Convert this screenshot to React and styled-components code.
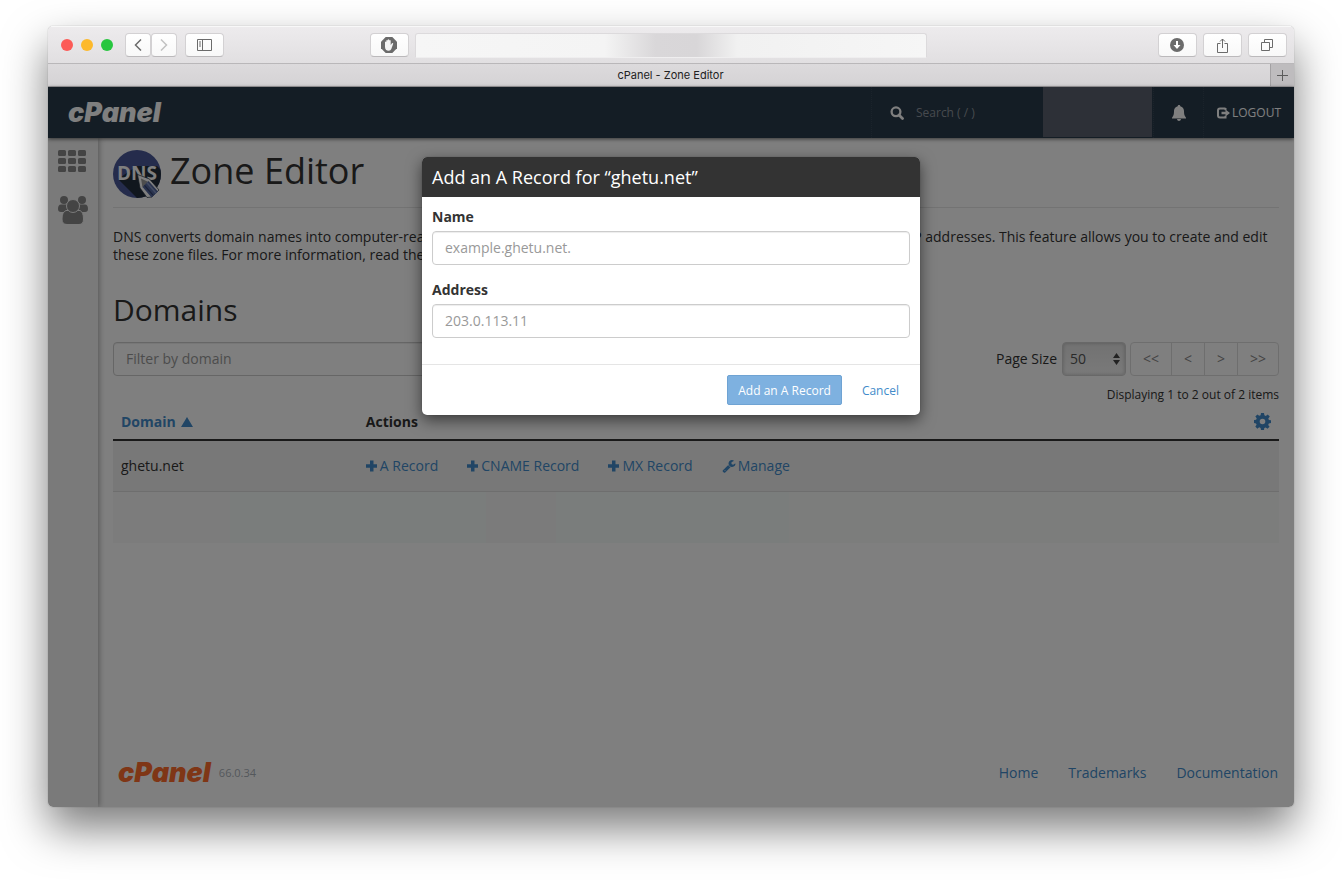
import React from "react";
import styled, { createGlobalStyle, css } from "styled-components";

const GlobalStyle = createGlobalStyle`
  *, *::before, *::after { box-sizing: border-box; }
  html { background: #fff; }
  body {
    margin: 0;
    color: #333;
    font-family: "Open Sans", "Noto Sans", sans-serif;
    font-size: 14px;
    line-height: 20px;
  }
  button, input, select { font: inherit; color: inherit; margin: 0; }
  h1, h2, p { margin: 0; font-weight: 400; }
  a { color: #428bca; text-decoration: none; }
  svg { display: block; flex: none; }
`;

/* ---------- browser window ---------- */

const Desktop = styled.div`
  min-height: 100vh;
  padding: 26px 48px 74px;
  display: flex;
  overflow: hidden;
`;

const BrowserWindow = styled.div`
  flex: 1;
  min-width: 0;
  display: flex;
  flex-direction: column;
  border-radius: 5px;
  overflow: hidden;
  box-shadow: 0 0 1px rgba(0, 0, 0, 0.45), 0 21px 44px rgba(0, 0, 0, 0.52);
`;

const Chrome = styled.div`
  display: grid;
  grid-template-columns: 29fr 42fr 29fr;
  gap: 6px;
  align-items: center;
  height: 38px;
  padding: 0 7px;
  background: linear-gradient(#edebed, #e1dfe1);
  border-top: 1px solid #f8f8f8;
  border-bottom: 1px solid #b9b7b9;
`;

const ChromeGroup = styled.div`
  display: flex;
  align-items: center;
  justify-content: ${(p) => (p.$end ? "flex-end" : "flex-start")};
  gap: ${(p) => p.$gap || 0}px;
`;

const Light = styled.button`
  width: 12px;
  height: 12px;
  padding: 0;
  border: 0;
  border-radius: 50%;
  background: ${(p) => p.$color};
`;

const ChromeButton = styled.button`
  display: flex;
  align-items: center;
  justify-content: center;
  width: ${(p) => (p.$small ? 26 : 39)}px;
  height: 24px;
  padding: 0;
  border: 1px solid #d3d1d3;
  border-bottom-color: #bbb9bb;
  border-radius: 4px;
  background: linear-gradient(#fff, #f8f8f8);
  color: #6b6b6b;
`;

const Spacer = styled.div`
  width: ${(p) => p.$width || 0}px;
  flex: ${(p) => (p.$grow ? 1 : "none")};
`;

const AddressField = styled.input`
  width: 100%;
  height: 25px;
  padding: 0 8px;
  border: 1px solid #dcdadc;
  border-bottom-color: #efeeef;
  border-radius: 3px 3px 0 0;
  background: linear-gradient(
    90deg, #f6f6f6 0%, #f4f4f4 37%, #d9d7d9 47%, #d8d6d8 55%, #f1f1f1 63%, #f6f6f6 100%
  );
`;

const TabBar = styled.div`
  display: flex;
  height: 23px;
  background: linear-gradient(#dcdadc, #d5d3d5);
  border-bottom: 1px solid #a3a1a3;
`;

const Tab = styled.div`
  flex: 1;
  padding-left: 23px;
  text-align: center;
  font: 11px/22px Inter, sans-serif;
  color: #222;
`;

const NewTab = styled.button`
  display: flex;
  align-items: center;
  justify-content: center;
  width: 24px;
  padding: 0;
  border: 0;
  border-left: 1px solid #a3a1a3;
  background: #bebcbe;
  color: #5c5c5c;
`;

/* ---------- application ---------- */

const Viewport = styled.div`
  position: relative;
  flex: 1;
  display: flex;
  flex-direction: column;
  background: #fff;
`;

const AppHeader = styled.header`
  display: flex;
  align-items: stretch;
  height: 51px;
  padding-left: 20px;
  background: #293a4a;
  color: #fff;
  box-shadow: 0 1px 4px rgba(0, 0, 0, 0.6);
  z-index: 1;
`;

const Brand = styled.a`
  display: flex;
  align-items: center;
  font: italic 900 27px/26px Inter, sans-serif;
  color: ${(p) => (p.$orange ? "#ff6c2c" : "#fff")};
`;

const HeaderItem = styled.div`
  display: flex;
  align-items: center;
  padding: ${(p) => p.$pad || "0"};
  border-left: 1px dotted #364757;
`;

const SearchInput = styled.input`
  width: 127px;
  padding: 0;
  margin-left: 12px;
  border: 0;
  background: none;
  font-size: 12px;
  &::placeholder { color: #8d959d; opacity: 1; }
`;

const AccountBlock = styled.div`
  width: 109px;
  margin: 0 1px 1px 0;
  background: #5b616e;
`;

const HeaderButton = styled.button`
  display: flex;
  align-items: center;
  gap: 2px;
  padding: 0;
  border: 0;
  background: none;
  font-size: 12px;
`;

const Body = styled.div`
  flex: 1;
  display: flex;
`;

const Sidebar = styled.nav`
  display: flex;
  flex-direction: column;
  align-items: flex-start;
  gap: 24px;
  width: 50px;
  padding: 12px 0 0 10px;
  background: #f5f5f5;
  box-shadow: 1px 0 6px rgba(0, 0, 0, 0.35);
  color: #888;
`;

const SideLink = styled.a`
  color: inherit;
`;

const Main = styled.main`
  flex: 1;
  min-width: 0;
  display: flex;
  flex-direction: column;
  padding: 12px 15px 24px;
`;

const TitleRow = styled.div`
  display: flex;
  gap: 9px;
  padding-bottom: 9px;
  margin-bottom: 20px;
  border-bottom: 1px solid #e6e6e6;
`;

const PageTitle = styled.h1`
  font-size: 36px;
  line-height: 42px;
`;

const Intro = styled.p`
  line-height: 18px;
  margin-bottom: 28px;
`;

const SectionTitle = styled.h2`
  font-size: 30px;
  line-height: 36px;
  margin-bottom: 14px;
`;

const ListTools = styled.div`
  display: flex;
  align-items: center;
  justify-content: space-between;
`;

const TextInput = styled.input`
  display: block;
  width: ${(p) => p.$width || "100%"};
  height: 34px;
  padding: 0 12px 2px;
  border: 1px solid #ccc;
  border-radius: 4px;
  background: #fff;
  box-shadow: inset 0 1px 1px rgba(0, 0, 0, 0.075);
  &::placeholder { color: #999; opacity: 1; }
`;

const Pager = styled.div`
  display: flex;
  align-items: center;
`;

const SelectWrap = styled.div`
  position: relative;
  margin: 0 4px 0 5px;
  svg {
    position: absolute;
    right: 6px;
    top: 11px;
    pointer-events: none;
  }
`;

const SizeSelect = styled.select`
  appearance: none;
  display: block;
  width: 64px;
  height: 34px;
  padding: 0 7px;
  border: 1px solid #d0d0d0;
  border-radius: 4px;
  background: linear-gradient(#e4e4e4, #f4f4f4);
  box-shadow: inset 0 0 3px 1px rgba(0, 0, 0, 0.14);
  color: #555;
`;

const PageButton = styled.button`
  width: ${(p) => (p.$wide ? 42 : 34)}px;
  height: 34px;
  margin-left: -1px;
  padding: 0;
  border: 1px solid #ddd;
  background: #fff;
  color: #888;
  &:first-of-type { margin-left: 0; border-radius: 4px 0 0 4px; }
  &:last-of-type { border-radius: 0 4px 4px 0; }
`;

const Count = styled.div`
  margin-top: 10px;
  text-align: right;
  font-size: 12px;
  line-height: 18px;
`;

const RecordTable = styled.table`
  width: 100%;
  border-collapse: separate;
  border-spacing: 0;
  table-layout: fixed;
`;

const Th = styled.th`
  width: ${(p) => p.$width || "auto"};
  height: 37px;
  padding: 0 8px;
  text-align: left;
  font-weight: 700;
  border-bottom: 2px solid #333;
`;

const Td = styled.td`
  height: 51px;
  padding: 0 8px;
  background: #f1f1f1;
  border-bottom: 1px solid #dcdcdc;
`;

const HiddenRowCell = styled.td`
  height: 51px;
  padding: 0;
  background: linear-gradient(
    90deg, #f8f8f8 0 10%, #f5faf8 10% 32%, #f7f7f7 32% 38%, #f5faf8 38% 58%, #f9faf9 58% 100%
  );
`;

const SortButton = styled.button`
  display: flex;
  align-items: center;
  gap: 5px;
  padding: 0;
  border: 0;
  background: none;
  font-weight: 700;
  color: #428bca;
`;

const GearButton = styled.button`
  display: block;
  margin-left: auto;
  padding: 0;
  border: 0;
  background: none;
  color: #428bca;
`;

const Actions = styled.div`
  display: flex;
  gap: 29px;
`;

const Action = styled.a`
  display: flex;
  align-items: center;
  gap: 2px;
`;

const Footer = styled.footer`
  display: flex;
  align-items: center;
  justify-content: space-between;
  height: 20px;
  margin-top: auto;
  padding: 0 1px 0 5px;
`;

const Version = styled.span`
  font-size: 11px;
  color: #a9b0b8;
`;

const FooterGroup = styled.div`
  display: flex;
  align-items: center;
  gap: ${(p) => p.$gap}px;
`;

/* ---------- modal ---------- */

const Backdrop = styled.div`
  position: absolute;
  inset: 0;
  z-index: 2;
  display: flex;
  justify-content: center;
  align-items: flex-start;
  padding-top: 70px;
  background: rgba(0, 0, 0, 0.5);
`;

const Modal = styled.form`
  width: 498px;
  border-radius: 5px;
  overflow: hidden;
  background: #fff;
  box-shadow: 0 0 1px rgba(0, 0, 0, 0.4), 0 5px 15px rgba(0, 0, 0, 0.55);
`;

const ModalTitle = styled.h2`
  padding: 0 10px;
  background: #333;
  color: #fff;
  font-size: 18px;
  line-height: 40px;
`;

const ModalBody = styled.div`
  display: grid;
  gap: 15px;
  padding: 10px 10px 26px;
`;

const Field = styled.div`
  display: grid;
  gap: 4px;
`;

const Label = styled.label`
  font-weight: ${(p) => (p.$plain ? 400 : 700)};
`;

const ModalFooter = styled.div`
  display: flex;
  justify-content: flex-end;
  gap: 9px;
  padding: 10px;
  border-top: 1px solid #e5e5e5;
`;

const ModalButton = styled.button`
  height: 30px;
  padding: 2px 10px 0;
  border: 1px solid transparent;
  border-radius: 2px;
  background: none;
  font-size: 12px;
  color: #428bca;
  ${(p) =>
    p.$primary &&
    css`
      background: #7eb1e0;
      border-color: #6fa3d3;
      color: #fff;
    `}
`;

/* ---------- icons ---------- */

const Stroke = ({ w, h, sw = 1, children }) => (
  <svg width={w} height={h} viewBox={`0 0 ${w} ${h}`} fill="none" stroke="currentColor" strokeWidth={sw}>
    {children}
  </svg>
);

const PlusIcon = () => (
  <svg width="12" height="12" viewBox="0 0 12 12" fill="currentColor">
    <path d="M4 .5h3.500v3.700H11v3.500H7.500V11.500H4V7.700H0V4.200h4z" />
  </svg>
);

const WrenchIcon = () => (
  <svg width="14" height="14" viewBox="0 0 1792 1792" fill="currentColor">
    <path d="M448 1472q0-26-19-45t-45-19-45 19-19 45 19 45 45 19 45-19 19-45zm644-420l-682 682q-37 37-90 37-52 0-91-37l-106-108q-38-36-38-90 0-53 38-91l681-681q39 98 114.500 173.500t173.500 114.500zm634-435q0 39-23 106-47 134-164.500 217.500t-258.500 83.500q-185 0-316.500-131.500t-131.500-316.500 131.500-316.500 316.500-131.500q58 0 121.500 16.500t107.500 46.500q16 11 16 28t-16 28l-293 169v224l193 107q5-3 79-48.500t135.500-81 70.500-35.500q15 0 23.500 10t8.500 25z" />
  </svg>
);

const GearIcon = () => (
  <svg width="17" height="17" viewBox="0 0 17 17" fill="currentColor">
    <path
      fillRule="evenodd"
      d="M7 0h3l.4 2.300 1.400.6L13.700 1.500l2.100 2.100-1.500 1.900.6 1.400L17 7.200v2.900l-2.200.4-.6 1.400 1.400 1.900-2.100 2-1.800-1.400-1.400.6L10 17H7l-.4-2.100-1.400-.6-1.900 1.400-2-2.100 1.300-1.800-.6-1.400L0 10V7l2.100-.3.6-1.400L1.300 3.500l2.100-2.100 1.800 1.400 1.400-.6zM8.500 5.700a2.800 2.800 0 1 0 0 5.600 2.800 2.800 0 0 0 0-5.600z"
    />
  </svg>
);

const SearchIcon = () => (
  <Stroke w={14} h={14} sw={2.3}>
    <circle cx="6" cy="5.800" r="4.400" />
    <path d="M9 9l3.500 3.500" strokeWidth="2.800" strokeLinecap="round" />
  </Stroke>
);

const BellIcon = () => (
  <svg width="14" height="16" viewBox="0 0 14 16" fill="currentColor">
    <path d="M7 0c.9 0 1.200.5 1.300 1.200C10.700 1.800 12 3.700 12 6c0 3.700.5 4.700 2 6.800V13.500H0v-.7C1.500 10.700 2 9.700 2 6c0-2.300 1.300-4.200 3.700-4.800C5.800.5 6.100 0 7 0zM5 14h4c-.2 1.200-.9 2-2 2s-1.800-.8-2-2z" />
  </svg>
);

const LogoutIcon = () => (
  <svg width="13" height="12" viewBox="0 0 13 12">
    <path d="M8.500 1.500H3Q1 1.500 1 3.500v5q0 2 2 2H8.500V8.800M8.500 3.200V1" fill="none" stroke="currentColor" strokeWidth="2" />
    <path d="M4.500 4.800h4V2.400L13 6 8.500 9.600V7.200h-4z" fill="currentColor" />
  </svg>
);

const GridIcon = () => (
  <svg width="28" height="22" viewBox="0 0 28 22" fill="currentColor">
    {[0, 8, 16].map((y) =>
      [0, 10, 20].map((x) => <rect key={`${x}-${y}`} x={x} y={y} width="8" height="6" rx="1.500" />)
    )}
  </svg>
);

const UsersIcon = () => (
  <svg width="30" height="28" viewBox="0 0 30 28" fill="currentColor">
    <circle cx="6" cy="4" r="4" />
    <circle cx="24" cy="4" r="4" />
    <path d="M3 8.500h8V16H3q-3 0-3-3 0-4.500 3-4.500zM27 8.500h-8V16h8q3 0 3-3 0-4.500-3-4.500z" />
    <path
      d="M8 14.500h14q3.500 1.500 3.500 8.500 0 5.500-4.500 5.500h-12Q4 28.500 4 23q0-7 4-8.500z"
      stroke="#f5f5f5"
      strokeWidth="1"
    />
    <circle cx="15" cy="10" r="6.500" stroke="#f5f5f5" strokeWidth="1" />
  </svg>
);

const DnsIcon = () => (
  <svg width="48" height="48" viewBox="0 0 48 48">
    <defs>
      <clipPath id="dns-disc"><circle cx="24" cy="24" r="24" /></clipPath>
    </defs>
    <g clipPath="url(#dns-disc)">
      <rect width="48" height="48" fill="#4b5998" />
      <path d="M5 29L24 16h20l8 8v28H28z" fill="#232f3d" />
    </g>
    <text x="4" y="30" fill="#fff" fontFamily="Open Sans, sans-serif" fontWeight="700" fontSize="19">DNS</text>
    <path d="M24.500 24.500l12 4.500 9.500 11-7 7-5 .5L27 38z" fill="#fff" stroke="#232f3d" strokeWidth=".7" />
    <path d="M28 28.500l7.500 3.500-6 5.500z" fill="#9a9a9a" />
    <path d="M35.500 31L45 41.500 38.500 47.500 29.500 37z" fill="#54689f" />
    <path d="M33.800 32.500l9.300 10.800" stroke="#8496c4" strokeWidth="1.600" />
    <path d="M31.500 35.300l8.500 9.900" stroke="#34426f" strokeWidth="1.300" />
  </svg>
);

const HandIcon = () => (
  <svg width="16" height="16" viewBox="0 0 16 16">
    <path d="M4.700 0h6.600L16 4.700v6.600L11.300 16H4.700L0 11.300V4.700z" fill="#6b6b6b" />
    <path d="M4 5q.7-.8 1.300 0V3.500q.7-.9 1.400 0V2.700q.8-1 1.500 0v.7q.8-.8 1.500.1V8l1.300-1.800q1.200-.5 1.200.5L10.300 12q-.6 1.700-2.500 1.700-3.800 0-3.800-4z" fill="#f4f4f4" />
  </svg>
);

/* ---------- page ---------- */

const recordActions = [
  { label: "A Record", Icon: PlusIcon },
  { label: "CNAME Record", Icon: PlusIcon },
  { label: "MX Record", Icon: PlusIcon },
  { label: "Manage", Icon: WrenchIcon },
];

function BrowserChrome() {
  return (
    <>
      <Chrome>
        <ChromeGroup>
          <Spacer $width={6} />
          <ChromeGroup $gap={8}>
            <Light $color="#fc5b57" aria-label="Close window" />
            <Light $color="#fdb92b" aria-label="Minimise window" />
            <Light $color="#27c63f" aria-label="Zoom window" />
          </ChromeGroup>
          <Spacer $width={12} />
          <ChromeButton $small aria-label="Back">
            <Stroke w={8} h={12} sw={1.5}><path d="M7 .5L1.500 6 7 11.500" /></Stroke>
          </ChromeButton>
          <ChromeButton $small aria-label="Forward">
            <Stroke w={8} h={12} sw={1.5}><path d="M1 .5L6.500 6 1 11.500" opacity=".4" /></Stroke>
          </ChromeButton>
          <Spacer $width={8} />
          <ChromeButton aria-label="Show sidebar">
            <Stroke w={15} h={12}>
              <path d="M.5.5h14v11H.5zM5.500.5v11M2 3h2M2 5h2M2 7h2" />
            </Stroke>
          </ChromeButton>
          <Spacer $grow />
          <ChromeButton aria-label="Content blocker"><HandIcon /></ChromeButton>
        </ChromeGroup>
        <AddressField aria-label="Address bar" />
        <ChromeGroup $end $gap={6}>
          <ChromeButton aria-label="Downloads">
            <svg width="14" height="14" viewBox="0 0 14 14">
              <circle cx="7" cy="7" r="7" fill="#6b6b6b" />
              <path d="M6 3h2v4h2.500L7 11 3.500 7H6z" fill="#fff" />
            </svg>
          </ChromeButton>
          <ChromeButton aria-label="Share">
            <Stroke w={11} h={15}><path d="M3.500 5.500h-3v9h10v-9h-3M5.500 10V1M3 3.500L5.500 1 8 3.500" /></Stroke>
          </ChromeButton>
          <ChromeButton aria-label="Show tabs">
            <Stroke w={12} h={12}><path d="M.5 3.500h8v8h-8zM3.500 3V.5h8v8H9" /></Stroke>
          </ChromeButton>
        </ChromeGroup>
      </Chrome>
      <TabBar>
        <Tab>cPanel - Zone Editor</Tab>
        <NewTab aria-label="New tab">
          <Stroke w={11} h={11}><path d="M5.500 0v11M0 5.500h11" /></Stroke>
        </NewTab>
      </TabBar>
    </>
  );
}

function AddRecordModal() {
  return (
    <Backdrop>
      <Modal role="dialog" aria-labelledby="modal-title" onSubmit={(e) => e.preventDefault()}>
        <ModalTitle id="modal-title">Add an A Record for “ghetu.net”</ModalTitle>
        <ModalBody>
          <Field>
            <Label htmlFor="record-name">Name</Label>
            <TextInput id="record-name" placeholder="example.ghetu.net." />
          </Field>
          <Field>
            <Label htmlFor="record-address">Address</Label>
            <TextInput id="record-address" placeholder="203.0.113.11" />
          </Field>
        </ModalBody>
        <ModalFooter>
          <ModalButton $primary type="submit">Add an A Record</ModalButton>
          <ModalButton type="button">Cancel</ModalButton>
        </ModalFooter>
      </Modal>
    </Backdrop>
  );
}

export default function App() {
  return (
    <>
      <GlobalStyle />
      <Desktop>
        <BrowserWindow>
          <BrowserChrome />
          <Viewport>
            <AppHeader>
              <Brand href="#home">cPanel</Brand>
              <Spacer $grow />
              <HeaderItem $pad="0 0 0 18px">
                <SearchIcon />
                <SearchInput type="search" placeholder="Search ( / )" aria-label="Search" />
              </HeaderItem>
              <AccountBlock />
              <HeaderItem $pad="0 17px 0 18px">
                <HeaderButton aria-label="Notifications"><BellIcon /></HeaderButton>
              </HeaderItem>
              <HeaderItem $pad="0 13px">
                <HeaderButton><LogoutIcon />LOGOUT</HeaderButton>
              </HeaderItem>
            </AppHeader>
            <Body>
              <Sidebar>
                <SideLink href="#apps" aria-label="Home"><GridIcon /></SideLink>
                <SideLink href="#users" aria-label="User manager"><UsersIcon /></SideLink>
              </Sidebar>
              <Main>
                <TitleRow>
                  <DnsIcon />
                  <PageTitle>Zone Editor</PageTitle>
                </TitleRow>
                <Intro>
                  DNS converts domain names into computer-readable IP addresses. DNS zone files configure domain
                  names to the correct IP addresses. This feature allows you to create and edit these zone files.
                  For more information, read the <a href="#docs">documentation</a>.
                </Intro>
                <SectionTitle>Domains</SectionTitle>
                <ListTools>
                  <TextInput $width="50%" placeholder="Filter by domain" aria-label="Filter by domain" />
                  <Pager>
                    <Label $plain htmlFor="page-size">Page Size</Label>
                    <SelectWrap>
                      <SizeSelect id="page-size" defaultValue="50">
                        <option>50</option>
                        <option>100</option>
                      </SizeSelect>
                      <svg width="7" height="12" viewBox="0 0 7 12" fill="#444">
                        <path d="M3.500 0L7 5H0zM3.500 12L0 7h7z" />
                      </svg>
                    </SelectWrap>
                    <PageButton $wide>&lt;&lt;</PageButton>
                    <PageButton>&lt;</PageButton>
                    <PageButton>&gt;</PageButton>
                    <PageButton $wide>&gt;&gt;</PageButton>
                  </Pager>
                </ListTools>
                <Count>Displaying 1 to 2 out of 2 items</Count>
                <RecordTable>
                  <thead>
                    <tr>
                      <Th $width="21%">
                        <SortButton>
                          Domain
                          <svg width="12" height="10" viewBox="0 0 12 10" fill="currentColor"><path d="M6 0l6 10H0z" /></svg>
                        </SortButton>
                      </Th>
                      <Th>Actions</Th>
                      <Th $width="60px">
                        <GearButton aria-label="Table settings"><GearIcon /></GearButton>
                      </Th>
                    </tr>
                  </thead>
                  <tbody>
                    <tr>
                      <Td>ghetu.net</Td>
                      <Td colSpan={2}>
                        <Actions>
                          {recordActions.map(({ label, Icon }) => (
                            <Action href="#record" key={label}><Icon />{label}</Action>
                          ))}
                        </Actions>
                      </Td>
                    </tr>
                    <tr>
                      <HiddenRowCell colSpan={3} />
                    </tr>
                  </tbody>
                </RecordTable>
                <Footer>
                  <FooterGroup $gap={8}>
                    <Brand $orange href="#cpanel">cPanel</Brand>
                    <Version>66.0.34</Version>
                  </FooterGroup>
                  <FooterGroup $gap={30}>
                    <a href="#home">Home</a>
                    <a href="#trademarks">Trademarks</a>
                    <a href="#documentation">Documentation</a>
                  </FooterGroup>
                </Footer>
              </Main>
            </Body>
            <AddRecordModal />
          </Viewport>
        </BrowserWindow>
      </Desktop>
    </>
  );
}
